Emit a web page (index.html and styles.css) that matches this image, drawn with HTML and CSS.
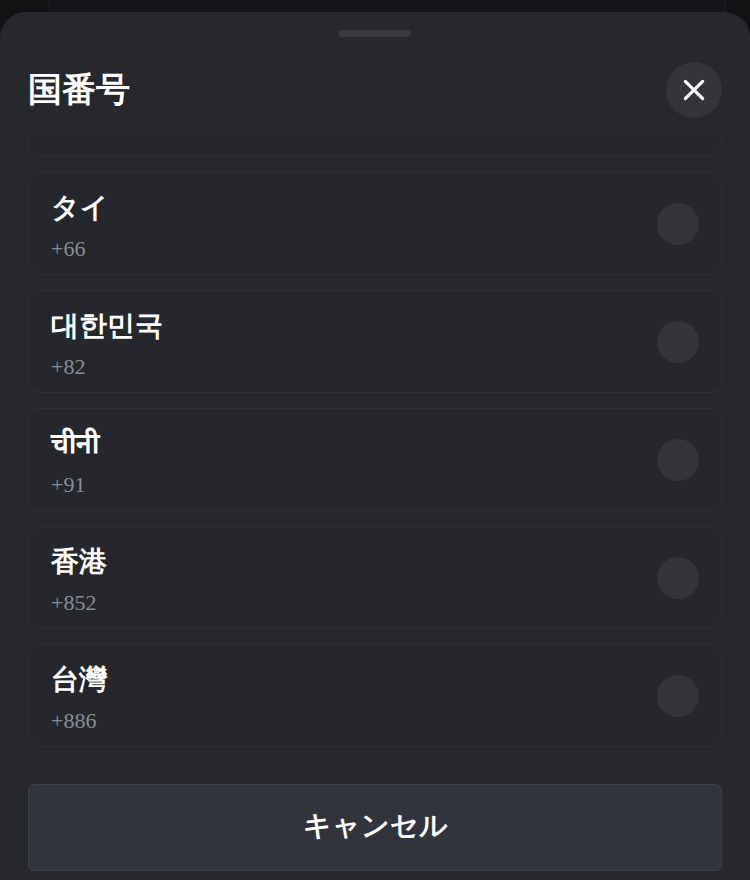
FILE: index.html
```html
<!DOCTYPE html>
<html lang="ja">
<head>
<meta charset="utf-8">
<title>国番号</title>
<link rel="stylesheet" href="styles.css">
</head>
<body>
<div class="backdrop"><div class="backdrop-page"></div></div>
<div class="sheet">
  <div class="handle"></div>
  <div class="header">
    <h1 class="title">国番号</h1>
    <button class="close" aria-label="閉じる">
      <svg width="24" height="24" viewBox="0 0 24 24" fill="none" stroke="#ffffff" stroke-width="3.4" stroke-linecap="round"><path d="M2.5 2.5L21.5 21.5M21.5 2.5L2.5 21.5"/></svg>
    </button>
  </div>
  <div class="list">
    <div class="list-inner">
      <div class="item item-partial"></div>
      <div class="item">
        <div class="info"><div class="name">タイ</div><div class="code">+66</div></div>
        <span class="radio"></span>
      </div>
      <div class="item">
        <div class="info"><div class="name">대한민국</div><div class="code">+82</div></div>
        <span class="radio"></span>
      </div>
      <div class="item">
        <div class="info"><div class="name">चीनी</div><div class="code">+91</div></div>
        <span class="radio"></span>
      </div>
      <div class="item">
        <div class="info"><div class="name">香港</div><div class="code">+852</div></div>
        <span class="radio"></span>
      </div>
      <div class="item">
        <div class="info"><div class="name">台灣</div><div class="code">+886</div></div>
        <span class="radio"></span>
      </div>
    </div>
  </div>
  <div class="footer">
    <button class="cancel">キャンセル</button>
  </div>
</div>
</body>
</html>
```

FILE: styles.css
```css
html, body {
  margin: 0;
  padding: 0;
  background: #111214;
  height: 880px;
  overflow: hidden;
  font-family: "Liberation Serif", serif;
}

.backdrop {
  height: 12px;
  display: flex;
  padding: 0 24px 0 48px;
}

.backdrop-page {
  flex: 1;
  background: #141518;
  border-left: 1px solid #1a1b1e;
  border-right: 1px solid #1c1d20;
}

.sheet {
  height: 868px;
  background: #26282d;
  border-radius: 26px 26px 0 0;
  display: flex;
  flex-direction: column;
  padding: 0 28px;
  box-sizing: border-box;
}

.handle {
  width: 72px;
  height: 7px;
  border-radius: 4px;
  background: #383a40;
  margin: 18px auto 0;
  flex: none;
}

.header {
  margin-top: 25px;
  height: 56px;
  display: flex;
  align-items: center;
  justify-content: space-between;
  flex: none;
}

.title {
  margin: 0;
  font-size: 34px;
  font-weight: 700;
  color: #ffffff;
  line-height: 40px;
}

.close {
  width: 56px;
  height: 56px;
  border-radius: 50%;
  border: none;
  background: #33353b;
  display: flex;
  align-items: center;
  justify-content: center;
  padding: 0;
}

.close svg {
  width: 22px;
  height: 22px;
}

.list {
  margin-top: 18px;
  height: 628px;
  overflow: hidden;
  flex: none;
}

.list-inner {
  margin-top: -82px;
  display: flex;
  flex-direction: column;
  gap: 15px;
}

.item {
  height: 103px;
  box-sizing: border-box;
  border: 1px solid #2f3136;
  border-radius: 12px;
  background: #25272c;
  display: flex;
  align-items: center;
  justify-content: space-between;
  padding: 0 22px;
  flex: none;
}

.info {
  display: flex;
  flex-direction: column;
  padding-top: 5px;
}

.name {
  font-size: 28px;
  font-weight: 700;
  color: #ffffff;
  line-height: 36px;
}

.code {
  font-size: 22px;
  color: #8a8d95;
  line-height: 28px;
  margin-top: 9px;
}

.radio {
  width: 42px;
  height: 42px;
  border-radius: 50%;
  background: #33353b;
  flex: none;
}

.footer {
  margin-top: 20px;
  flex: none;
}

.cancel {
  width: 100%;
  height: 87px;
  background: #32343b;
  border: 1px solid #3e4047;
  border-radius: 6px;
  color: #ffffff;
  font-family: "Liberation Serif", serif;
  font-size: 28px;
  font-weight: 700;
  padding: 0 0 4px;
}
```
